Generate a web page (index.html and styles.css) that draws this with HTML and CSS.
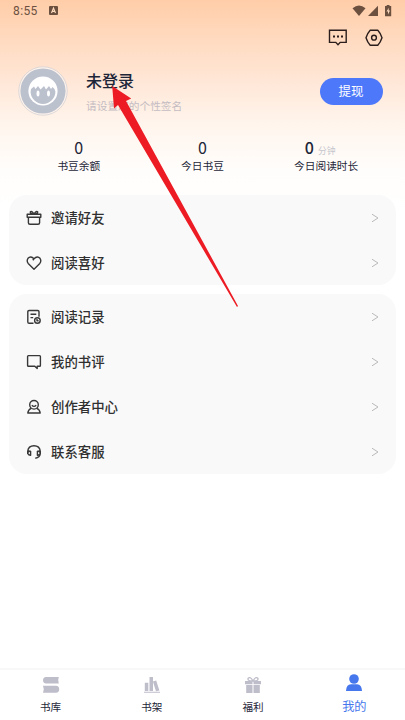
FILE: index.html
```html
<!DOCTYPE html>
<html lang="zh-CN">
<head>
<meta charset="utf-8">
<title>我的</title>
<link rel="stylesheet" href="styles.css">
</head>
<body>
<div class="app">
  <header class="status">
    <span class="time">8:55</span>
    <svg class="input-mode" width="9" height="9" viewBox="0 0 9 9"><rect width="9" height="9" rx="1" fill="#6b503f"/><path d="M2.5 7 4.5 2 6.5 7M3.2 5.4H5.8" fill="none" stroke="#ffdcbf" stroke-width="1.1"/></svg>
    <svg class="signals" width="42" height="13" viewBox="0 0 42 13" fill="#6b503f"><path d="M.5 3.2Q7-2 13.5 3.2L7 11Z"/><path d="M26 .8V11H16Z"/><path d="M33 1h1.7V0h2.8v1h1.7V11.3H33Z"/><path d="m36.8 2.8-2.3 3.7h1.5v3l2-3.9h-1.4Z" fill="#ffdcbf"/></svg>
  </header>
  <div class="tools">
    <svg width="20" height="18" viewBox="0 0 20 18" fill="none" stroke="#2a1d1b" stroke-width="1.4"><path d="M1.5 1.3H18.2V13.4H12.2L10 15.8 7.8 13.4H1.5Z"/><path d="M5 7.5h2M9 7.5h2M13 7.5h2" stroke-width="1.8"/></svg>
    <svg width="18" height="18" viewBox="0 0 18 18" fill="none" stroke="#2a1d1b" stroke-width="1.4" stroke-linejoin="round"><path d="M5.2 1.2h7.6Q15.5 4 17 8.7 15.5 13.4 12.8 16.2H5.2Q2.5 13.4 1 8.7 2.5 4 5.2 1.2Z"/><circle cx="9" cy="8.7" r="2.4"/></svg>
  </div>
  <section class="profile">
    <svg class="avatar" width="50" height="50" viewBox="0 0 50 50"><circle cx="25" cy="25" r="24.2" fill="#fff4ec" stroke="#d3d1d6" stroke-width=".8"/><circle cx="25" cy="25" r="22.6" fill="#bcc1ce"/><circle cx="25" cy="25" r="14.6" fill="#fff"/><path d="M12.6 25.5Q13 22 16 20.5L17.5 23 20 20 22.5 23.5 26 20 28 23.5 31 20 33 23 34.5 21Q37 22.5 37.4 25.5A12.4 12.4 0 0 1 12.6 25.5Z" fill="#bcc1ce"/><ellipse cx="20" cy="27.6" rx="1.5" ry="3" fill="#fff"/><ellipse cx="30.5" cy="27.6" rx="1.5" ry="3" fill="#fff"/></svg>
    <div class="identity"><h1>未登录</h1><p>请设置您的个性签名</p></div>
    <button class="withdraw">提现</button>
  </section>
  <section class="stats">
    <div class="stat"><div class="value">0</div><div>书豆余额</div></div>
    <div class="stat"><div class="value">0</div><div>今日书豆</div></div>
    <div class="stat"><div class="value strong">0<small>分钟</small></div><div>今日阅读时长</div></div>
  </section>
  <nav class="menu">
    <a class="row"><svg class="icon" viewBox="0 0 16 16"><path d="M1.2 4.2H14.8V7.2H1.2ZM2.4 7.2V12.8Q2.4 14.3 4 14.3H12Q13.6 14.3 13.6 12.8V7.2M8 4.2Q4.2 4 4.3 2 5.5.2 8 4.2 10.5.2 11.7 2 11.8 4 8 4.2"/></svg><span>邀请好友</span><svg class="chevron" viewBox="0 0 8 10"><path d="M1 1.2 7 5 1 8.8"/></svg></a>
    <a class="row"><svg class="icon" viewBox="0 0 16 16"><path d="M8 14.2 2.2 8.4Q.3 5.8 2 3.3 4.6.4 8 3.8 11.4.4 14 3.3 15.7 5.8 13.8 8.4ZM8 3.8 6.8 5.3"/></svg><span>阅读喜好</span><svg class="chevron" viewBox="0 0 8 10"><path d="M1 1.2 7 5 1 8.8"/></svg></a>
  </nav>
  <nav class="menu">
    <a class="row"><svg class="icon" viewBox="0 0 16 16"><path d="M7.5 14.3H3.1Q1.8 14.3 1.8 13V2.8Q1.8 1.5 3.1 1.5H11.7Q13 1.5 13 2.8V7.8M4.5 5.2H10.3M4.5 8.6H7.2"/><circle cx="11.4" cy="11.5" r="2.8"/><path d="M11 10V11.7H12.6"/></svg><span>阅读记录</span><svg class="chevron" viewBox="0 0 8 10"><path d="M1 1.2 7 5 1 8.8"/></svg></a>
    <a class="row"><svg class="icon" viewBox="0 0 16 16"><path d="M7.4 12.2H2.4Q1.6 12.2 1.6 11.4V2.4Q1.6 1.6 2.4 1.6H13.6Q14.4 1.6 14.4 2.4V11.4Q14.4 12.2 13.6 12.2H11.2V14.5L8.8 12.2H7"/></svg><span>我的书评</span><svg class="chevron" viewBox="0 0 8 10"><path d="M1 1.2 7 5 1 8.8"/></svg></a>
    <a class="row"><svg class="icon" viewBox="0 0 16 16"><circle cx="8" cy="5.8" r="4.3"/><path d="M5.8 6.2Q8 8.6 10.2 6.2M5.2 9.4Q2.2 10.7 1.8 14H14.2Q13.8 10.7 10.8 9.4"/></svg><span>创作者中心</span><svg class="chevron" viewBox="0 0 8 10"><path d="M1 1.2 7 5 1 8.8"/></svg></a>
    <a class="row"><svg class="icon" viewBox="0 0 16 16"><path d="M1.7 10V7.4Q2.3 1.7 8 1.7T14.3 7.4V9.6Q13.8 13.5 9.3 14.2M4.6 7V11.2Q2.2 11.4 1.7 9.2 1.7 7.2 4.6 7M11.4 7V11.2Q13.8 11.4 14.3 9.2 14.3 7.2 11.4 7"/></svg><span>联系客服</span><svg class="chevron" viewBox="0 0 8 10"><path d="M1 1.2 7 5 1 8.8"/></svg></a>
  </nav>
  <footer class="tabs">
    <a class="tab"><svg width="18" height="18" viewBox="0 0 18 18" fill="#bebdca"><path d="M4 1H16.8L16.2 4 16.8 7.5H4Q1 7 1 4.2T4 1M1 9.8H14Q17.2 10.1 17.2 13.2T14 16.8H1L1.8 13.2Z"/></svg><span>书库</span></a>
    <a class="tab"><svg width="18" height="18" viewBox="0 0 18 18" fill="#bebdca"><path d="M1.8 6.8H5.3V15H1.8ZM6.5 1H10V15H6.5ZM9.9 5.6 13.2 4.6 16.4 14.4 13 15.2ZM1 15.8H17V16.8H1Z"/></svg><span>书架</span></a>
    <a class="tab"><svg width="18" height="18" viewBox="0 0 18 18" fill="#bebdca"><path d="M1 5H8.5V8.2H1ZM9.5 5H17V8.2H9.5ZM2.2 9H8.5V17H2.2ZM9.5 9H15.8V17H9.5Z"/><path d="M9 5Q3.5 5.2 4 2.5 6.2-.2 9 5 11.8-.2 14 2.5 14.5 5.2 9 5" fill="none" stroke="#bebdca" stroke-width="1.3"/></svg><span>福利</span></a>
    <a class="tab active"><svg width="18" height="18" viewBox="0 0 18 18" fill="#4677ed"><circle cx="9" cy="5" r="4.8"/><path d="M1 17Q1.2 10.4 6 10.2H12Q16.8 10.4 17 17Z"/></svg><span>我的</span></a>
  </footer>
  <svg class="arrow" width="128" height="224" viewBox="0 0 128 224"><path d="M1.2 1 20.2 13.6 15 16 127 221 126 222 7 20 3 23.5Z" fill="#ed1c24"/></svg>
</div>
</body>
</html>
```
FILE: styles.css
```css
* { box-sizing: border-box; }
body { margin: 0; background: #fff; }
.app {
  position: relative;
  display: flex;
  flex-direction: column;
  width: 405px;
  height: 720px;
  overflow: hidden;
  font-family: "Noto Sans CJK SC", sans-serif;
  color: #1d2638;
  background: linear-gradient(#ffcda8 0, #ffdcc3 45px, #ffe7d7 82px, #fff5ed 125px, #fffdfb 170px, #fff 210px);
}
.app svg { flex: none; display: block; }
.status { display: flex; height: 24px; padding: 5px 11px 0 13px; }
.time { font: 12px/13px Roboto, sans-serif; color: #6b503f; letter-spacing: .4px; }
.input-mode { margin: 1px 0 0 11px; }
.signals { margin-left: auto; }
.tools { display: flex; justify-content: flex-end; gap: 17px; height: 36px; padding: 5px 22px 0 0; }
.profile { display: flex; height: 76px; padding: 6px 22.5px 0 18px; }
.identity { flex: 1; padding: 2px 0 0 18px; }
h1 { margin: 0; font-size: 16px; line-height: 24px; font-weight: 500; }
p { margin: 6px 0 0; font-size: 10.7px; line-height: 16px; color: #c4bcc2; }
.withdraw {
  width: 63px;
  height: 27px;
  margin-top: 12px;
  padding: 0 0 1px;
  border: 0;
  border-radius: 14px;
  color: #fff;
  background: #4d78fa;
  font: 12.5px/26px "Noto Sans CJK SC", sans-serif;
}
.stats { display: grid; grid-template-columns: repeat(3, 123.7px); justify-content: center; height: 59px; font-size: 10.7px; line-height: 16px; text-align: center; }
.value { height: 22px; font-size: 16px; line-height: 23px; }
.strong { padding-right: 12px; font-weight: 500; }
.strong small { margin-left: 4px; font-size: 8.8px; font-weight: 400; color: #c5c6cd; }
.menu { margin: 0 9px 9px; border-radius: 18px; background: #f9f9f9; }
.row { display: flex; align-items: center; height: 45px; padding: 0 17px; font-size: 13.4px; line-height: 20px; font-weight: 500; color: #303030; }
.row span { flex: 1; padding: 0 0 2px 9px; }
.icon { width: 16px; height: 16px; fill: none; stroke: #383838; stroke-width: 1.4; stroke-linejoin: round; }
.chevron { width: 8px; height: 10px; fill: none; stroke: #bababa; stroke-width: 1; }
.tabs { display: flex; height: 52px; margin-top: auto; border-top: 2px solid #f8f8f8; background: #fff; }
.tab { display: flex; flex: 1; flex-direction: column; align-items: center; padding-top: 6px; font-size: 10.6px; line-height: 16px; }
.tab span { margin-top: 5px; }
.active { padding-top: 4px; font-size: 12.2px; color: #4677ed; }
.active span { margin-top: 6px; }
.arrow { position: absolute; left: 111px; top: 85px; }
```
